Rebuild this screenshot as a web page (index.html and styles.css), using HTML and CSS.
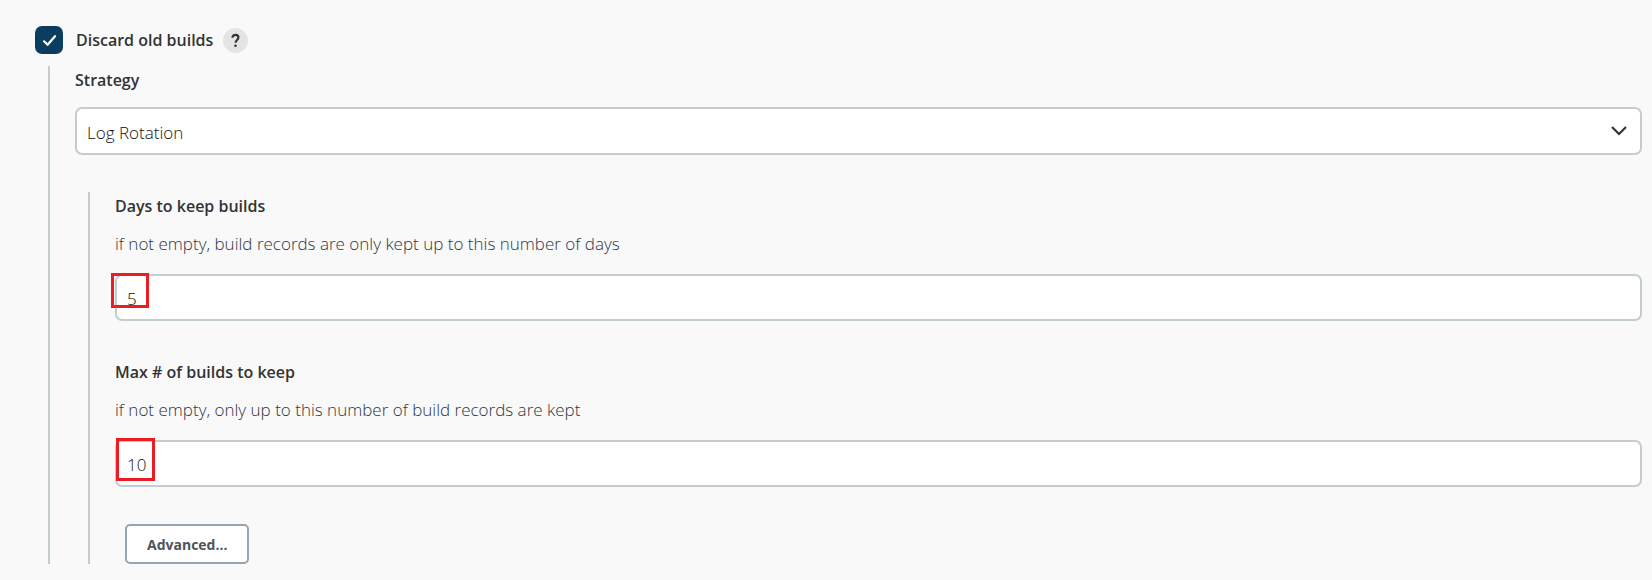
FILE: index.html
```html
<!DOCTYPE html>
<html lang="en">
<head>
<meta charset="utf-8">
<meta name="viewport" content="width=device-width, initial-scale=1">
<title>Discard old builds</title>
<link rel="stylesheet" href="styles.css">
</head>
<body>
<form class="config">
  <div class="toggle">
    <span class="check">
      <input class="check-input" type="checkbox" id="discard" checked>
      <svg class="check-mark" viewBox="0 0 28 28" aria-hidden="true"><path d="M9 15.3l3.6 3.5 7.4-8.6"/></svg>
    </span>
    <label class="toggle-label" for="discard">Discard old builds</label>
    <button class="help" type="button" aria-label="Help"><svg class="help-icon" viewBox="0 0 25 25" aria-hidden="true"><path d="M9.5 9.8c0-1.9 1.2-2.9 3-2.9s2.9 1 2.9 2.6c0 2.6-2.8 2.5-2.8 5.2"/><circle cx="12.5" cy="17.7" r="1.3"/></svg></button>
  </div>
  <div class="group">
    <label class="label" for="strategy">Strategy</label>
    <div class="select-wrap">
      <select class="control select" id="strategy"><option>Log Rotation</option></select>
      <svg class="chevron" viewBox="0 0 18 12" aria-hidden="true"><path d="M2 2l7 7 7-7"/></svg>
    </div>
    <div class="group nested">
      <div class="field">
        <label class="label" for="days">Days to keep builds</label>
        <p class="hint">if not empty, build records are only kept up to this number of days</p>
        <div class="entry">
          <input class="control" type="text" id="days" value="5">
          <span class="mark mark-days"></span>
        </div>
      </div>
      <div class="field">
        <label class="label" for="max">Max # of builds to keep</label>
        <p class="hint">if not empty, only up to this number of build records are kept</p>
        <div class="entry">
          <input class="control" type="text" id="max" value="10">
          <span class="mark mark-max"></span>
        </div>
      </div>
      <button class="advanced" type="button">Advanced...</button>
    </div>
  </div>
</form>
</body>
</html>
```
FILE: styles.css
```css
* {
  box-sizing: border-box;
}

body {
  margin: 0;
  background: #f9f9f9;
  color: #333;
  font-family: "Segoe UI", "Open Sans", "Noto Sans", sans-serif;
  font-size: 17px;
  line-height: 24px;
}

.config {
  padding: 26px 10px 16px 35px;
}

.toggle {
  display: flex;
  align-items: center;
  height: 28px;
  margin-bottom: 12px;
}

.check {
  display: grid;
  width: 28px;
  height: 28px;
  margin-right: 13px;
}

.check-input,
.check-mark {
  grid-area: 1 / 1;
  width: 28px;
  height: 28px;
  margin: 0;
}

.check-input {
  appearance: none;
  background: #0b3d61;
  border-radius: 7px;
}

.check-mark {
  fill: none;
  stroke: #fff;
  stroke-width: 2.2;
  stroke-linecap: round;
  stroke-linejoin: round;
  pointer-events: none;
}

.toggle-label,
.label {
  font-size: 16px;
  font-weight: 600;
}

.help {
  width: 25px;
  height: 25px;
  margin-left: 10px;
  padding: 0;
  border: 0;
  border-radius: 50%;
  background: #e4e4e4;
}

.help-icon {
  display: block;
  fill: none;
  stroke: #333;
  stroke-width: 2.2;
}

.help-icon circle {
  fill: #333;
  stroke: none;
}

.group {
  margin-left: 13px;
  padding-left: 25px;
  border-left: 2px solid #c3cdd1;
}

.label {
  display: block;
  padding-top: 2px;
}

.select-wrap {
  display: grid;
  align-items: center;
  margin: 15px 0 37px;
}

.control {
  display: block;
  width: 100%;
  height: 47px;
  padding: 1px 10px 0;
  border: 2px solid #c3cdd1;
  border-radius: 7px;
  background: #fff;
  color: #111;
  font-family: inherit;
  font-size: 17px;
  font-weight: 300;
}

.select {
  grid-area: 1 / 1;
  height: 48px;
  padding: 2px 10px 0;
  appearance: none;
}

.chevron {
  grid-area: 1 / 1;
  justify-self: end;
  width: 18px;
  height: 12px;
  margin-right: 14px;
  fill: none;
  stroke: #333;
  stroke-width: 2.2;
  pointer-events: none;
}

.nested {
  display: flow-root;
}

.field {
  margin-bottom: 37px;
}

.hint {
  margin: 14px 0 18px;
  color: #2f3640;
  font-weight: 300;
}

.entry {
  position: relative;
}

.mark {
  position: absolute;
  border: 3px solid #ed1c24;
  pointer-events: none;
}

.mark-days {
  top: -1px;
  left: -4px;
  width: 38px;
  height: 35px;
}

.mark-max {
  top: -2px;
  left: 1px;
  width: 39px;
  height: 43px;
}

.advanced {
  display: block;
  height: 40px;
  margin-left: 10px;
  padding: 0 20px;
  border: 2px solid #98a4ae;
  border-radius: 5px;
  background: #fff;
  color: #4d545d;
  font-family: inherit;
  font-size: 14px;
  font-weight: 700;
}
```
